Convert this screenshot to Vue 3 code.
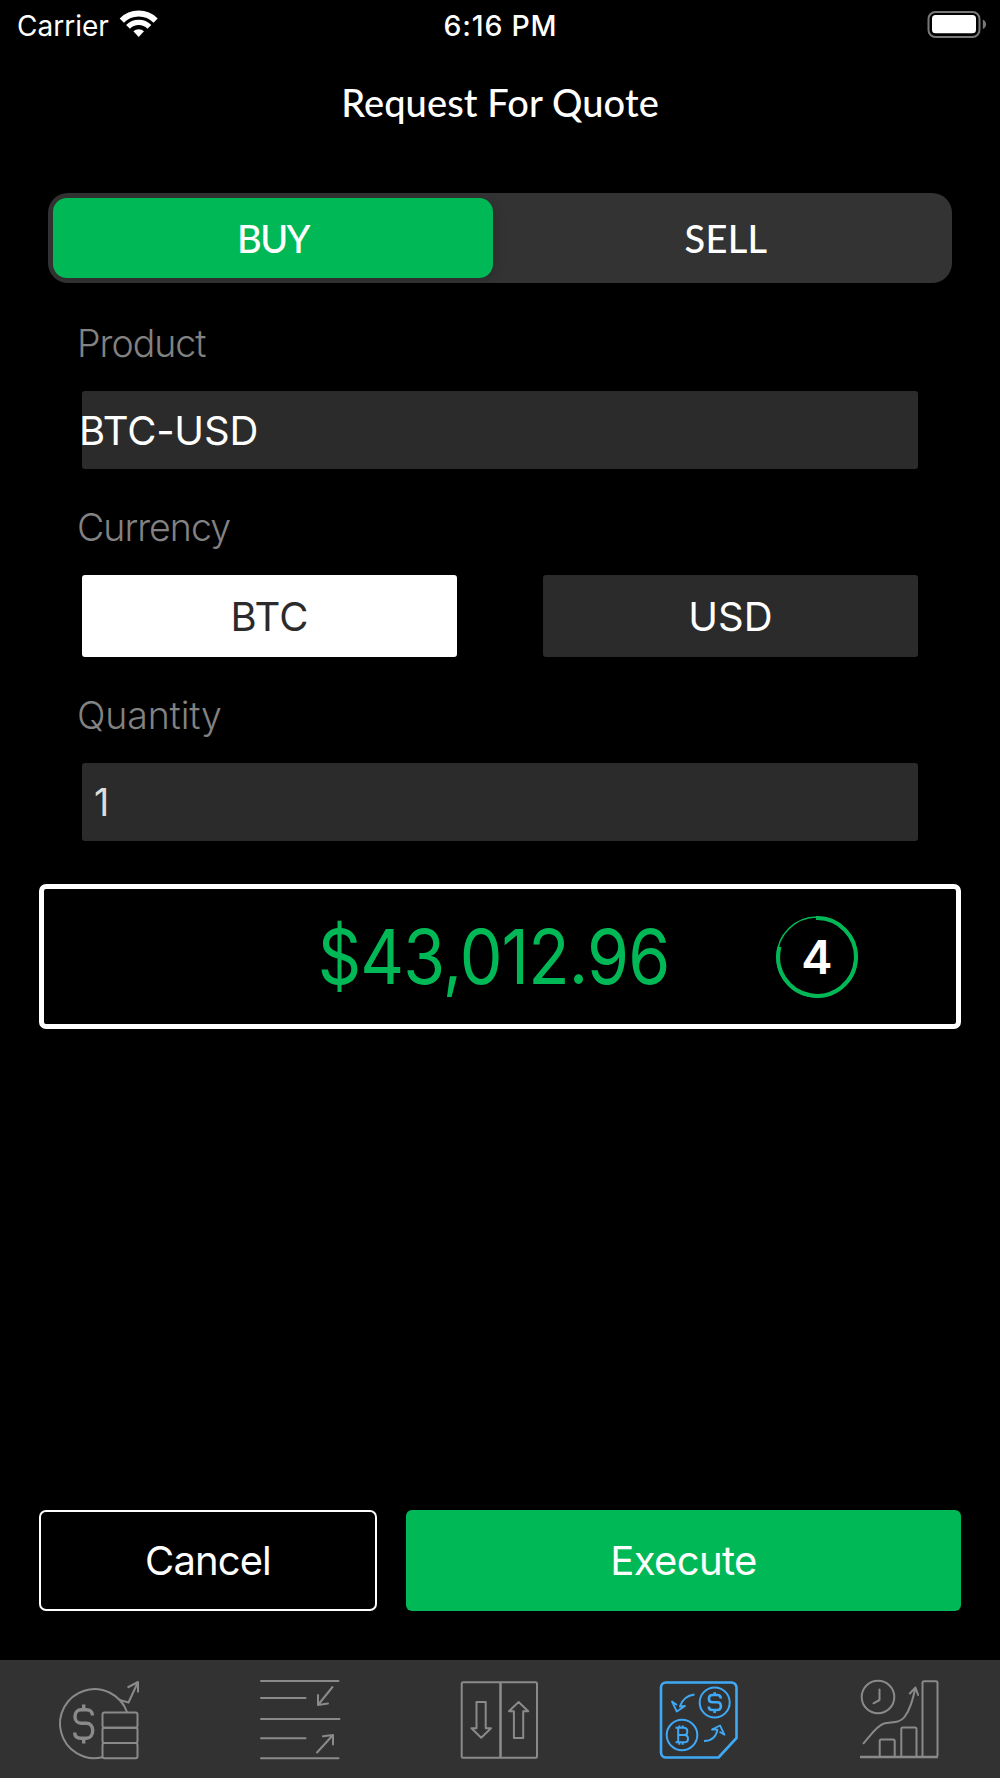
<script setup>
import { ref } from 'vue'

const side = ref('BUY')
const currency = ref('BTC')
const sides = ['BUY', 'SELL']
const currencies = ['BTC', 'USD']
</script>

<template>
  <div class="screen">
    <header class="status">
      <div class="carrier">
        <span>Carrier</span>
        <svg class="wifi" width="40" height="30" viewBox="119 9 40 30">
          <g fill="none" stroke="#fff">
            <path d="M121.8 20.6a23.9 23.9 0 0 1 33.8 0" stroke-width="6" />
            <path d="M128 26.8a15.1 15.1 0 0 1 21.4 0" stroke-width="5.4" />
          </g>
          <path d="M133.4 31.3a7.6 7.6 0 0 1 10.6 0L138.7 37z" fill="#fff" />
        </svg>
      </div>
      <span class="time">6:16 PM</span>
      <svg class="battery" width="60" height="28" viewBox="928 10 60 28">
        <rect x="929.5" y="12" width="51" height="25" rx="7" fill="none" stroke="#787878" stroke-width="2" />
        <rect x="933" y="15" width="44" height="18.3" rx="3.6" fill="#fff" />
        <path d="M983.8 19.5c4.4 2 4.4 7.6 0 9.6z" fill="#787878" />
      </svg>
    </header>

    <h1 class="title"><span>Request For Quote</span></h1>

    <div class="segment">
      <button
        v-for="s in sides"
        :key="s"
        :class="['seg', s.toLowerCase(), { on: side === s }]"
        @click="side = s"
      >{{ s }}</button>
    </div>

    <section class="form">
      <label class="label product">Product</label>
      <div class="field"><span class="pair">BTC-USD</span></div>
      <label class="label">Currency</label>
      <div class="choices">
        <button
          v-for="c in currencies"
          :key="c"
          :class="['choice', { on: currency === c }]"
          @click="currency = c"
        >{{ c }}</button>
      </div>
      <label class="label quantity">Quantity</label>
      <div class="field"><span class="amount">1</span></div>
    </section>

    <section class="quote">
      <div class="price"><span>$43,012.96</span></div>
      <div class="timer">
        <svg width="82" height="82" viewBox="-41 -41 82 82">
          <g fill="none" stroke="#00b956">
            <circle r="40" stroke-width="1.6" />
            <path d="M-1 -38.9A38.9 38.9 0 1 1 -37.5 -10.2" stroke-width="4" />
          </g>
        </svg>
        <span class="count">4</span>
      </div>
    </section>

    <footer class="actions">
      <button class="cancel">Cancel</button>
      <button class="execute">Execute</button>
    </footer>

    <nav class="tabs">
      <a class="tab">
        <svg viewBox="10 10 120 118">
          <path d="M72 107.3A34.5 34.5 0 1 1 97 62" />
          <rect x="72.5" y="62.5" width="35" height="15.3" rx="2" />
          <rect x="72.5" y="77.8" width="35" height="15.3" rx="2" />
          <rect x="72.5" y="93.1" width="35" height="15.2" rx="2" />
          <path d="M89.500 50l9 2.500L108 32M97.500 37.500L108 32v10.500" />
          <path class="heavy" d="M62.500 65.500c0-4-3-5.800-6-5.800h-5.400c-3.600 0-6.100 2.600-6.100 6.800s2.500 6.700 6.100 6.700h5.200c3.800 0 6.400 2.700 6.400 7.300s-2.600 7.700-6.400 7.700h-5.400c-3.600 0-6.200-1.900-6.200-5.700M53.700 54.500v5M53.700 88.500v5" />
        </svg>
      </a>
      <a class="tab">
        <svg viewBox="210 10 120 118">
          <path d="M231 31h77.500M231 48h44.500M231 69h78.500M231 88.300h44.500M231 108.200h77.500" stroke-linecap="round" />
          <path d="M302.500 37L288 55M288 45v10l10-1.500M287 102.500L303 85M293 86.300l10-1.300v9.500" stroke-linecap="round" />
        </svg>
      </a>
      <a class="tab">
        <svg viewBox="0 10 120 118">
          <rect x="21.700" y="32.200" width="75.300" height="75.500" rx="1.500" />
          <path class="bold" d="M60.500 32v76" />
          <path d="M36.500 52h9.200v26.300H51L41.200 87.800 31.500 78.300h5zM78.600 52l9.600 9.300h-5V88h-9.300V61.300H69z" />
        </svg>
      </a>
      <a class="tab active">
        <svg viewBox="0 10 120 118">
          <path class="bold" d="M26 32.500h65.500a5 5 0 0 1 5 5V88l-18 19.500H26a5 5 0 0 1-5-5v-65a5 5 0 0 1 5-5z" />
          <circle cx="74.700" cy="52.500" r="15" />
          <circle cx="42" cy="85" r="15.300" />
          <path class="bold" d="M80.800 48.500c0-2.400-1.700-3.500-3.500-3.500h-4.700c-2.200 0-3.700 1.500-3.700 3.700s1.500 3.600 3.700 3.600h4.500c2.300 0 3.800 1.500 3.800 3.900s-1.500 3.800-3.800 3.800h-4.800c-1.800 0-3.500-1.200-3.500-3.600M74.700 42.300v3M74.700 60v3" />
          <path d="M35.500 77.800h8.300c2.300 0 3.500 1.500 3.500 3.600s-1.200 3.600-3.500 3.600h-5.500 6c2.400 0 3.700 1.600 3.700 3.700s-1.300 3.600-3.700 3.600h-8.800M38.200 77.800v14.500M39.300 75.500v2M42.700 75.500v2M39.300 92.500v2.300M42.700 92.500v2.300" />
          <path class="thin" d="M54.500 44.500C46.500 45.500 42 50 39.800 56.500L45 56l-8.200 5.500L32 51.500l5 3.500M64 91c7.500 0 12-4 13.500-11.300L72 79.500l8-4 4.500 9.300-5-3" />
        </svg>
      </a>
      <a class="tab">
        <svg viewBox="0 10 120 118">
          <circle cx="38" cy="47" r="16.300" />
          <path d="M39.500 39.500V50l-6 3.300" stroke-linecap="round" />
          <path d="M23.500 93.300C30 86 37 75.500 44 73.500S59 74 64.500 67C70 60 72.500 50 75.500 38M69.800 43.500l5.700-6 2.600 7.500" stroke-linecap="round" />
          <path d="M39.700 106V91a1.500 1.500 0 0 1 1.500-1.500h12a1.500 1.500 0 0 1 1.500 1.500v15M61.300 106V79a1.500 1.500 0 0 1 1.500-1.500H75a1.500 1.500 0 0 1 1.500 1.500v27M82.500 106V32.700a1.500 1.500 0 0 1 1.500-1.500h12a1.500 1.500 0 0 1 1.500 1.500V106" />
          <path class="bold" d="M20 107h78" />
        </svg>
      </a>
    </nav>
  </div>
</template>

<style>
body {
  background: #000;
}
</style>

<style scoped>
.screen {
  box-sizing: border-box;
  display: flex;
  flex-direction: column;
  width: 1000px;
  height: 1778px;
  background: #000;
  color: #fff;
  font-family: Inter, "Liberation Sans", sans-serif;
  overflow: hidden;
}
button {
  padding: 0;
  border: 0;
  font: inherit;
  color: inherit;
}
.status {
  display: grid;
  grid-template-columns: 1fr auto 1fr;
  align-items: center;
  height: 51px;
  padding: 0 13px 0 17px;
  font-size: 28px;
}
.carrier {
  display: flex;
  align-items: center;
  gap: 10px;
}
.wifi {
  margin-top: -3px;
}
.time {
  font-size: 28.5px;
  font-weight: 500;
  letter-spacing: 0.8px;
  margin-left: -3px;
}
.battery {
  justify-self: end;
  margin-top: -3px;
}
.title {
  margin: 0;
  height: 104px;
  line-height: 103px;
  text-align: center;
  font-family: Lato, Inter, sans-serif;
  font-size: 38px;
  font-weight: 500;
  letter-spacing: 0.1px;
}
.segment {
  box-sizing: border-box;
  display: flex;
  gap: 7px;
  width: 904px;
  height: 90px;
  margin: 38px auto 0;
  padding: 5px 0 5px 5px;
  border-radius: 20px;
  background: #333;
}
.seg {
  flex: 0 0 440px;
  border-radius: 14px;
  background: none;
  font-family: Lato, Inter, sans-serif;
  font-size: 38px;
  font-weight: 500;
  letter-spacing: -1.6px;
}
.seg.sell {
  flex: 1;
  letter-spacing: 0.3px;
}
.seg.on {
  background: #00b956;
  box-shadow: 2px 2px 12px rgba(0, 0, 0, 0.14);
}
.form {
  display: flex;
  flex-direction: column;
  padding: 3px 82px 0;
}
.label {
  height: 50px;
  margin: 33px 0 23px -5px;
  line-height: 52px;
  font-size: 37.5px;
  font-weight: 300;
  letter-spacing: -1px;
  color: #828282;
}
.label.product {
  height: 49px;
  line-height: 49px;
}
.label.quantity {
  letter-spacing: -0.15px;
}
.field {
  display: flex;
  align-items: center;
  height: 78px;
  border-radius: 3px;
  background: #2b2b2b;
}
.pair {
  margin-left: -3px;
  font-size: 40px;
  letter-spacing: -0.2px;
}
.amount {
  margin-left: 12px;
  font-size: 37.5px;
  color: #ddd;
}
.choices {
  display: flex;
  justify-content: space-between;
}
.choice {
  width: 375px;
  height: 82px;
  border-radius: 3px;
  background: #2b2b2b;
  font-size: 40px;
}
.choice.on {
  background: #fff;
  color: #2b2b2b;
}
.quote {
  box-sizing: border-box;
  display: grid;
  grid-template-columns: 186px 530px 1fr;
  align-items: center;
  height: 145px;
  margin: 43px 39px 0;
  border: 5px solid #fff;
  border-radius: 7px;
}
.price {
  grid-column: 2;
  margin-left: -3px;
  text-align: center;
  font-size: 75px;
  line-height: 1;
  letter-spacing: -1px;
  color: #00b956;
  transform: scaleX(0.905);
}
.timer {
  display: grid;
  place-items: center;
  width: 82px;
  height: 82px;
  margin-left: 16px;
}
.timer > * {
  grid-area: 1 / 1;
}
.count {
  font-size: 47px;
  line-height: 1;
  font-weight: 600;
}
.actions {
  display: flex;
  gap: 29px;
  height: 101px;
  margin: auto 39px 49px;
  font-size: 40px;
}
.cancel {
  box-sizing: border-box;
  width: 338px;
  border: 2px solid #fff;
  border-radius: 7px;
  background: none;
  letter-spacing: -0.9px;
}
.execute {
  flex: 1;
  border-radius: 6px;
  background: #00b956;
  letter-spacing: -0.6px;
}
.tabs {
  display: flex;
  height: 118px;
  background: #323232;
}
.tab {
  display: flex;
  justify-content: center;
  width: 200px;
  color: #8a8a8a;
}
.tab.active {
  color: #3fa9f5;
}
.tab svg {
  width: 120px;
  height: 118px;
  fill: none;
  stroke: currentColor;
  stroke-width: 2;
  stroke-linejoin: round;
}
.tab .bold {
  stroke-width: 2.6;
}
.tab .heavy {
  stroke-width: 3.4;
}
.tab .thin {
  stroke-width: 1.8;
}
</style>
